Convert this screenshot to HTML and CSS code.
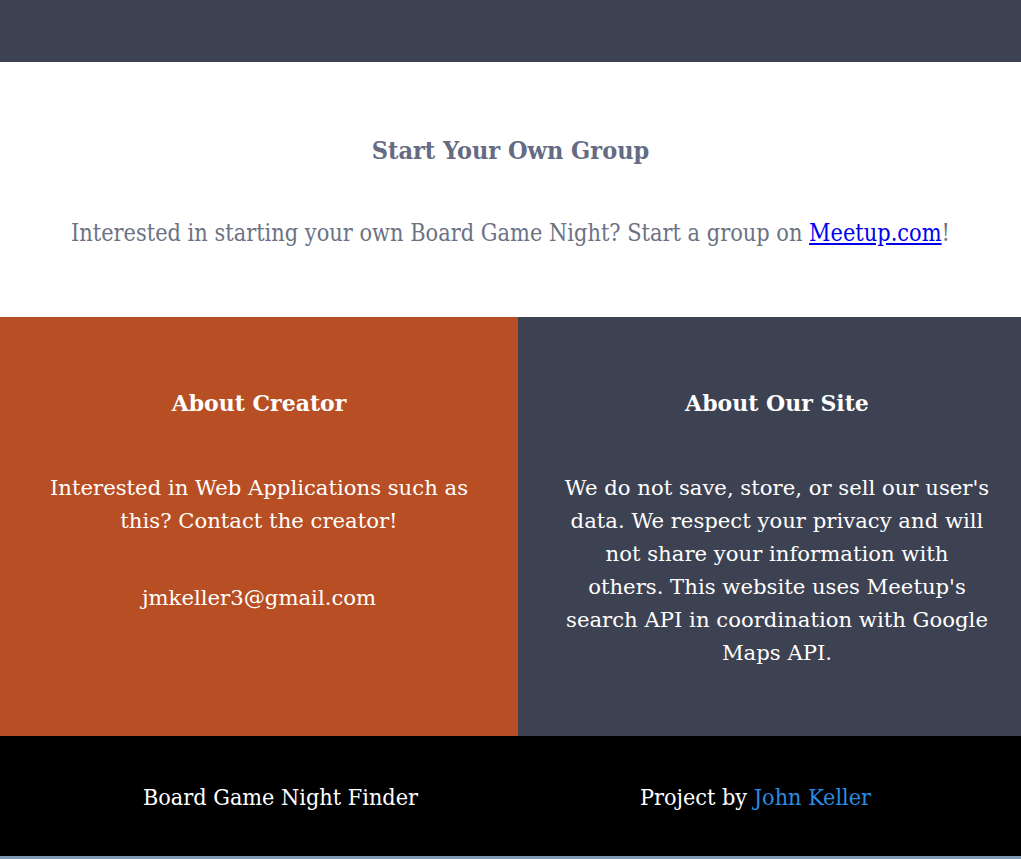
FILE: index.html
```html
<!DOCTYPE html>
<html lang="en">
<head>
<meta charset="utf-8">
<title>Board Game Night Finder</title>
<link rel="stylesheet" href="styles.css">
</head>
<body>
<header class="topbar"></header>
<section class="group">
  <h2 class="group-title">Start Your Own Group</h2>
  <p class="group-text">Interested in starting your own Board Game Night? Start a group on <a href="#" class="meetup">Meetup.com</a>!</p>
</section>
<section class="about">
  <div class="about-col creator">
    <h3 class="about-title">About Creator</h3>
    <p class="about-text">Interested in Web Applications such as this? Contact the creator!</p>
    <p class="about-text">jmkeller3@gmail.com</p>
  </div>
  <div class="about-col site">
    <h3 class="about-title">About Our Site</h3>
    <p class="about-text">We do not save, store, or sell our user's data. We respect your privacy and will not share your information with<br>others. This website uses Meetup's<br>search API in coordination with Google<br>Maps API.</p>
  </div>
</section>
<footer class="footer">
  <div class="footer-col">Board Game Night Finder</div>
  <div class="footer-col">Project by <a href="#" class="author">John Keller</a></div>
</footer>
</body>
</html>
```

FILE: styles.css
```css
html, body {
  margin: 0;
  padding: 0;
}
body {
  font-family: "DejaVu Serif", serif;
  background: #7f9bb4;
  width: 1021px;
  height: 859px;
  overflow: hidden;
}
.topbar {
  height: 62px;
  background: #3d4252;
}
.group {
  background: #fff;
  height: 255px;
  box-sizing: border-box;
  padding-top: 74px;
  text-align: center;
}
.group-title {
  margin: 0;
  font-family: "DejaVu Serif Condensed", "DejaVu Serif", serif;
  font-size: 25px;
  line-height: 30px;
  font-weight: bold;
  color: #646b82;
}
.group-text {
  margin: 52px 0 0;
  font-family: "DejaVu Serif Condensed", "DejaVu Serif", serif;
  font-size: 23.3px;
  line-height: 30px;
  color: #6c7283;
}
.meetup {
  color: #0000ee;
}
.about {
  display: grid;
  grid-template-columns: 518px 518px;
  height: 419px;
}
.about-col {
  padding: 69px 45px 0;
  text-align: center;
  color: #fff;
}
.creator {
  background: #b84f24;
}
.site {
  background: #3d4252;
}
.about-title {
  margin: 0 0 51px;
  font-size: 22px;
  font-weight: bold;
  line-height: 34px;
}
.about-text {
  margin: 0 0 44px;
  font-size: 21.2px;
  line-height: 33px;
}
.footer {
  background: #000;
  height: 120px;
  display: grid;
  grid-template-columns: 475px 475px;
  padding-left: 43px;
  align-items: center;
  color: #fff;
  font-family: "DejaVu Serif Condensed", "DejaVu Serif", serif;
  font-size: 23.2px;
}
.footer-col {
  text-align: center;
}
.author {
  color: #2a8ce0;
  text-decoration: none;
}
```
